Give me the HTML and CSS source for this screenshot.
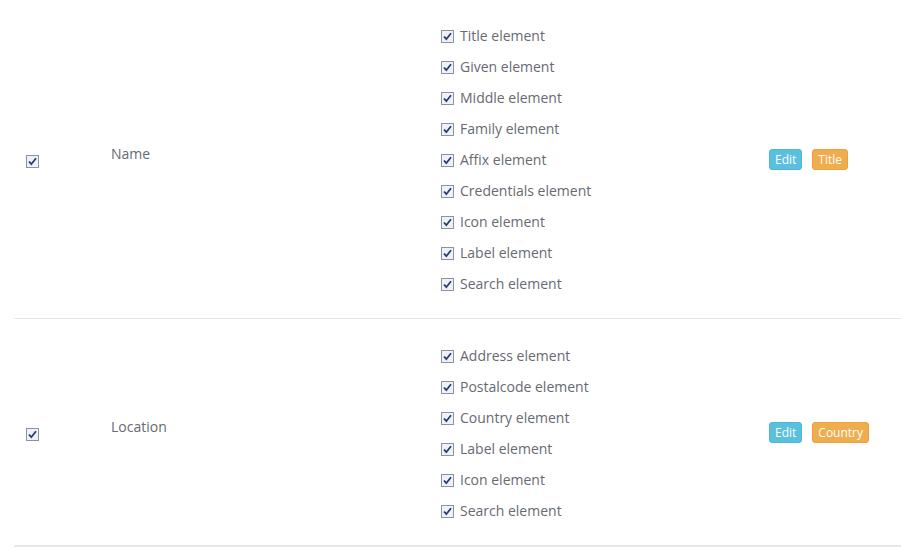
FILE: index.html
```html
<!DOCTYPE html>
<html>
<head>
<meta charset="utf-8">
<link rel="stylesheet" href="styles.css">
</head>
<body>
<div class="wrap">
  <table class="grid">
    <colgroup>
      <col class="c1"><col class="c2"><col class="c3"><col class="c4">
    </colgroup>
    <tbody>
      <tr class="row">
        <td class="cell-check"><span class="cb"><svg width="13" height="13" viewBox="0 0 13 13"><rect x="0.5" y="0.5" width="12" height="12" fill="#eef1f5" stroke="#8a93a3"/><path d="M3 6.5 L5.3 9.2 L10 3.2" fill="none" stroke="#283a6e" stroke-width="1.8"/></svg></span></td>
        <td class="cell-name"><span class="name">Name</span></td>
        <td class="cell-items">
          <ul class="items">
            <li class="item"><span class="cb"><svg width="13" height="13" viewBox="0 0 13 13"><rect x="0.5" y="0.5" width="12" height="12" fill="#eef1f5" stroke="#8a93a3"/><path d="M3 6.5 L5.3 9.2 L10 3.2" fill="none" stroke="#283a6e" stroke-width="1.8"/></svg></span>Title element</li>
            <li class="item"><span class="cb"><svg width="13" height="13" viewBox="0 0 13 13"><rect x="0.5" y="0.5" width="12" height="12" fill="#eef1f5" stroke="#8a93a3"/><path d="M3 6.5 L5.3 9.2 L10 3.2" fill="none" stroke="#283a6e" stroke-width="1.8"/></svg></span>Given element</li>
            <li class="item"><span class="cb"><svg width="13" height="13" viewBox="0 0 13 13"><rect x="0.5" y="0.5" width="12" height="12" fill="#eef1f5" stroke="#8a93a3"/><path d="M3 6.5 L5.3 9.2 L10 3.2" fill="none" stroke="#283a6e" stroke-width="1.8"/></svg></span>Middle element</li>
            <li class="item"><span class="cb"><svg width="13" height="13" viewBox="0 0 13 13"><rect x="0.5" y="0.5" width="12" height="12" fill="#eef1f5" stroke="#8a93a3"/><path d="M3 6.5 L5.3 9.2 L10 3.2" fill="none" stroke="#283a6e" stroke-width="1.8"/></svg></span>Family element</li>
            <li class="item"><span class="cb"><svg width="13" height="13" viewBox="0 0 13 13"><rect x="0.5" y="0.5" width="12" height="12" fill="#eef1f5" stroke="#8a93a3"/><path d="M3 6.5 L5.3 9.2 L10 3.2" fill="none" stroke="#283a6e" stroke-width="1.8"/></svg></span>Affix element</li>
            <li class="item"><span class="cb"><svg width="13" height="13" viewBox="0 0 13 13"><rect x="0.5" y="0.5" width="12" height="12" fill="#eef1f5" stroke="#8a93a3"/><path d="M3 6.5 L5.3 9.2 L10 3.2" fill="none" stroke="#283a6e" stroke-width="1.8"/></svg></span>Credentials element</li>
            <li class="item"><span class="cb"><svg width="13" height="13" viewBox="0 0 13 13"><rect x="0.5" y="0.5" width="12" height="12" fill="#eef1f5" stroke="#8a93a3"/><path d="M3 6.5 L5.3 9.2 L10 3.2" fill="none" stroke="#283a6e" stroke-width="1.8"/></svg></span>Icon element</li>
            <li class="item"><span class="cb"><svg width="13" height="13" viewBox="0 0 13 13"><rect x="0.5" y="0.5" width="12" height="12" fill="#eef1f5" stroke="#8a93a3"/><path d="M3 6.5 L5.3 9.2 L10 3.2" fill="none" stroke="#283a6e" stroke-width="1.8"/></svg></span>Label element</li>
            <li class="item"><span class="cb"><svg width="13" height="13" viewBox="0 0 13 13"><rect x="0.5" y="0.5" width="12" height="12" fill="#eef1f5" stroke="#8a93a3"/><path d="M3 6.5 L5.3 9.2 L10 3.2" fill="none" stroke="#283a6e" stroke-width="1.8"/></svg></span>Search element</li>
          </ul>
        </td>
        <td class="cell-actions"><span class="btn btn-info">Edit</span><span class="btn btn-warning">Title</span></td>
      </tr>
      <tr class="row last">
        <td class="cell-check"><span class="cb"><svg width="13" height="13" viewBox="0 0 13 13"><rect x="0.5" y="0.5" width="12" height="12" fill="#eef1f5" stroke="#8a93a3"/><path d="M3 6.5 L5.3 9.2 L10 3.2" fill="none" stroke="#283a6e" stroke-width="1.8"/></svg></span></td>
        <td class="cell-name"><span class="name">Location</span></td>
        <td class="cell-items">
          <ul class="items">
            <li class="item"><span class="cb"><svg width="13" height="13" viewBox="0 0 13 13"><rect x="0.5" y="0.5" width="12" height="12" fill="#eef1f5" stroke="#8a93a3"/><path d="M3 6.5 L5.3 9.2 L10 3.2" fill="none" stroke="#283a6e" stroke-width="1.8"/></svg></span>Address element</li>
            <li class="item"><span class="cb"><svg width="13" height="13" viewBox="0 0 13 13"><rect x="0.5" y="0.5" width="12" height="12" fill="#eef1f5" stroke="#8a93a3"/><path d="M3 6.5 L5.3 9.2 L10 3.2" fill="none" stroke="#283a6e" stroke-width="1.8"/></svg></span>Postalcode element</li>
            <li class="item"><span class="cb"><svg width="13" height="13" viewBox="0 0 13 13"><rect x="0.5" y="0.5" width="12" height="12" fill="#eef1f5" stroke="#8a93a3"/><path d="M3 6.5 L5.3 9.2 L10 3.2" fill="none" stroke="#283a6e" stroke-width="1.8"/></svg></span>Country element</li>
            <li class="item"><span class="cb"><svg width="13" height="13" viewBox="0 0 13 13"><rect x="0.5" y="0.5" width="12" height="12" fill="#eef1f5" stroke="#8a93a3"/><path d="M3 6.5 L5.3 9.2 L10 3.2" fill="none" stroke="#283a6e" stroke-width="1.8"/></svg></span>Label element</li>
            <li class="item"><span class="cb"><svg width="13" height="13" viewBox="0 0 13 13"><rect x="0.5" y="0.5" width="12" height="12" fill="#eef1f5" stroke="#8a93a3"/><path d="M3 6.5 L5.3 9.2 L10 3.2" fill="none" stroke="#283a6e" stroke-width="1.8"/></svg></span>Icon element</li>
            <li class="item"><span class="cb"><svg width="13" height="13" viewBox="0 0 13 13"><rect x="0.5" y="0.5" width="12" height="12" fill="#eef1f5" stroke="#8a93a3"/><path d="M3 6.5 L5.3 9.2 L10 3.2" fill="none" stroke="#283a6e" stroke-width="1.8"/></svg></span>Search element</li>
          </ul>
        </td>
        <td class="cell-actions"><span class="btn btn-info">Edit</span><span class="btn btn-warning">Country</span></td>
      </tr>
    </tbody>
  </table>
</div>
</body>
</html>
```
FILE: styles.css
```css
html, body {
  margin: 0;
  padding: 0;
  background: #ffffff;
}
body {
  font-family: "Open Sans", "Liberation Sans", sans-serif;
  font-size: 14px;
  color: #676a72;
}
.wrap {
  padding-left: 14px;
}
.grid {
  width: 887px;
  border-collapse: collapse;
  table-layout: fixed;
}
.c1 { width: 89px; }
.c2 { width: 330px; }
.c3 { width: 328px; }
.c4 { width: 140px; }
.row td {
  vertical-align: middle;
  border-bottom: 1px solid #e7e8ea;
  padding: 0;
}
.row.last td {
  border-bottom: 2px solid #e7e8ea;
}
.cell-check {
  padding-left: 12px !important;
}
.cb {
  display: inline-block;
  width: 13px;
  height: 13px;
  vertical-align: middle;
}
.cb svg {
  display: block;
}
.cell-check .cb {
  margin-top: 1px;
}
.cell-name {
  padding-left: 8px !important;
}
.name {
  display: inline-block;
  padding-bottom: 11px;
}
.cell-items {
  padding: 20px 0 19px 8px !important;
}
.row.last .cell-items {
  padding: 21px 0 19px 8px !important;
}
.items {
  list-style: none;
  margin: 0;
  padding: 0;
}
.item {
  height: 31px;
  display: flex;
  align-items: center;
  gap: 6px;
}
.item .cb {
  margin-top: 1px;
}
.cell-actions {
  padding-left: 8px !important;
}
.btn {
  display: inline-block;
  font-size: 12px;
  padding: 0 5px;
  border-radius: 3px;
  color: #ffffff;
  margin-right: 10px;
  vertical-align: middle;
  height: 19px;
  line-height: 19px;
}
.btn-info {
  background: #5bc0de;
  border: 1px solid #4fb6d6;
}
.btn-warning {
  background: #f0ad4e;
  border: 1px solid #e9a23d;
}
```
